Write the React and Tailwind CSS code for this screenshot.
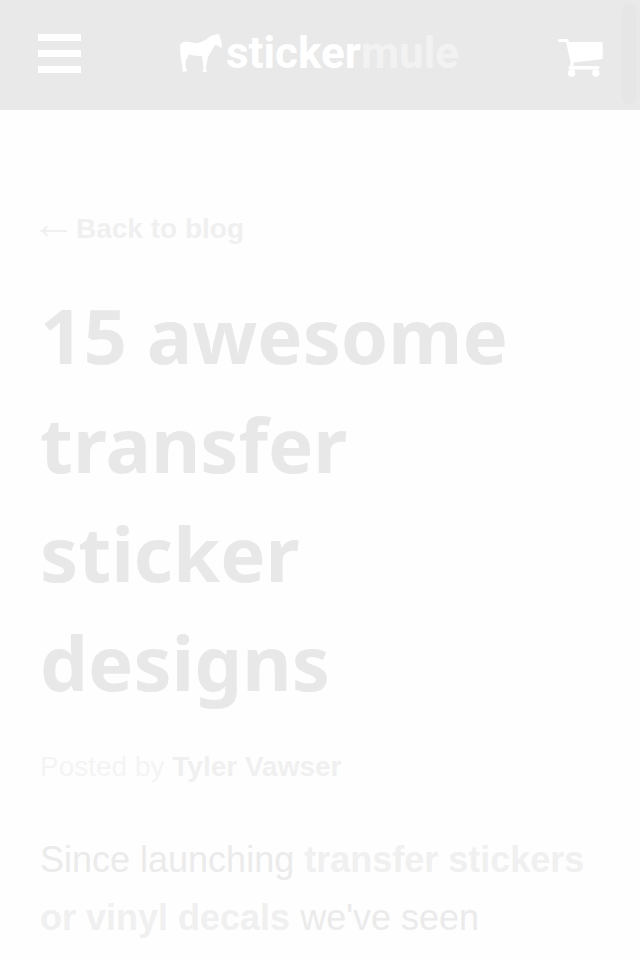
function MenuIcon() {
  return (
    <span className="flex w-[43px] flex-col gap-[9px]">
      <span className="h-[7px] bg-white" />
      <span className="h-[7px] bg-white" />
      <span className="h-[7px] bg-white" />
    </span>
  );
}

function Mule() {
  return (
    <svg viewBox="30 38 129 120" className="h-10 w-[43px]" fill="#fff" aria-hidden="true">
      <path d="M30 78 C31 70 36 65 45 65 C54 62 62 66 70 67 C80 69 89 67 98 63 C108 59 116 51 124 46 C129 43 134 43 138 43 L141 40 L143 44 L147 38 L148 46 C151 54 154 63 156 71 L155 80 C152 83 149 83 147 79 C144 75 139 74 134 75 C130 81 128 87 125 93 C121 98 118 103 115 108 C112 119 110 130 108 143 L111 155 L99 156 L97 151 L101 145 C99 133 98 122 96 106 C84 109 70 106 58 102 C55 108 51 113 48 118 C46 128 47 137 48 144 L52 153 L38 154 L36 149 L38 145 C36 132 33 121 33 110 C31 100 30 88 30 78 Z" />
    </svg>
  );
}

function CartIcon() {
  return (
    <svg viewBox="0 0 45 48" className="h-12 w-[45px]" fill="#fff" aria-hidden="true">
      <path d="M1.5 10 H9 Q10.2 10 10.4 11.2 L10.8 13 H43 Q44.7 13 44.7 14.7 V28.5 Q44.7 30 43.2 30.2 L15.5 33.6 L15.2 37 H40 Q41.5 37 41.5 38.8 Q41.5 40.6 40 40.6 H12 Q10.4 40.6 10.4 39 Q10.4 37.8 12 37 L12.8 34 L8 13 H1.5 Q0 13 0 11.5 Q0 10 1.5 10 Z" />
      <circle cx="13.6" cy="44" r="3.7" />
      <circle cx="37.8" cy="44" r="3.7" />
    </svg>
  );
}

export default function App() {
  return (
    <div className="min-h-screen bg-[#fefefe] font-['Liberation_Sans',Arial,sans-serif]">
      <header className="relative flex h-[110px] items-center justify-between bg-[#e9e9e9] pr-[37px] pb-1 pl-[38px]">
        <button type="button" aria-label="Menu" className="flex">
          <MenuIcon />
        </button>
        <a href="#home" className="flex items-center gap-[3px] font-[Roboto,sans-serif] text-[44px] leading-10 font-bold text-white">
          <Mule />
          <span>
            sticker<span className="text-[#f2f2f2]">mule</span>
          </span>
        </a>
        <a href="#cart" aria-label="Cart">
          <CartIcon />
        </a>
        <div className="absolute top-1 right-1 h-[100px] w-[14px] rounded-full bg-[#e6e6e6]" />
      </header>
      <main className="px-10 pt-[103px]">
        <a href="#blog" className="flex items-center gap-2 text-[28px] leading-8 font-bold text-[#f0f0f0]">
          <svg viewBox="0 0 28 16" className="h-4 w-7" fill="none" stroke="currentColor" strokeWidth="2" aria-hidden="true">
            <path d="M2 10 H27 M7 5 Q5 9 2 10 Q5 11 7 15" />
          </svg>
          Back to blog
        </a>
        <h1 className="mt-[35px] max-w-[480px] font-['Noto_Sans',sans-serif] text-[76px] leading-[109px] font-bold text-[#e8e8e8]">
          15 awesome transfer sticker designs
        </h1>
        <p className="mt-[35px] text-[28px] leading-8 text-[#f4f4f4]">
          Posted by <a href="#author" className="font-bold text-[#f0f0f0]">Tyler Vawser</a>
        </p>
        <p className="mt-12 text-[36px] leading-[58px] text-[#ebebeb]">
          Since launching <a href="#transfer" className="font-bold text-[#f0f0f0]">transfer stickers or vinyl decals</a> we've seen
        </p>
      </main>
    </div>
  );
}
